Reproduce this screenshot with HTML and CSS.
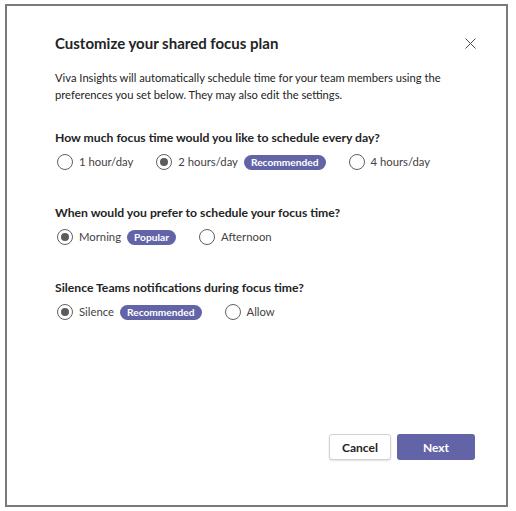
FILE: index.html
```html
<!DOCTYPE html>
<html>
<head>
<meta charset="utf-8">
<link rel="stylesheet" href="styles.css">
</head>
<body>
<div class="frame">
  <div class="header">
    <h1 class="title">Customize your shared focus plan</h1>
    <button class="close" aria-label="Close">
      <svg width="11" height="11" viewBox="0 0 11 11"><path d="M0.5 0.5L10.5 10.5M10.5 0.5L0.5 10.5" stroke="#4a4a4a" stroke-width="1" fill="none"/></svg>
    </button>
  </div>
  <p class="intro">Viva Insights will automatically schedule time for your team members using the preferences you set below. They may also edit the settings.</p>

  <div class="group">
    <div class="question">How much focus time would you like to schedule every day?</div>
    <div class="options">
      <label class="opt"><span class="radio"></span>1 hour/day</label>
      <label class="opt"><span class="radio checked"></span>2 hours/day<span class="badge">Recommended</span></label>
      <label class="opt"><span class="radio"></span>4 hours/day</label>
    </div>
  </div>

  <div class="group">
    <div class="question">When would you prefer to schedule your focus time?</div>
    <div class="options">
      <label class="opt"><span class="radio checked"></span>Morning<span class="badge">Popular</span></label>
      <label class="opt"><span class="radio"></span>Afternoon</label>
    </div>
  </div>

  <div class="group">
    <div class="question">Silence Teams notifications during focus time?</div>
    <div class="options">
      <label class="opt"><span class="radio checked"></span>Silence<span class="badge">Recommended</span></label>
      <label class="opt"><span class="radio"></span>Allow</label>
    </div>
  </div>

  <div class="footer">
    <button class="btn btn-secondary">Cancel</button>
    <button class="btn btn-primary">Next</button>
  </div>
</div>
</body>
</html>
```
FILE: styles.css
```css
* { box-sizing: border-box; }
html, body { margin: 0; padding: 0; background: #fff; }
body {
  font-family: "Lato", "Noto Sans", sans-serif;
  color: #242424;
}
.frame {
  margin: 4px 0 0 5px;
  width: 503px;
  height: 503px;
  border: 2px solid #7a7a7a;
  padding: 25px 31px 45px 48px;
  display: flex;
  flex-direction: column;
}
.header {
  display: flex;
  justify-content: space-between;
  align-items: center;
}
.title {
  margin: 0;
  font-size: 15px;
  line-height: 24px;
  font-weight: 700;
  color: #242424;
}
.close {
  border: 0;
  background: none;
  padding: 0;
  width: 11px;
  height: 11px;
  display: flex;
  margin-right: -1px;
}
.intro {
  margin: 14px 0 0;
  font-size: 11.2px;
  line-height: 17px;
  color: #242424;
}
.group { margin-top: 26px; }
.group + .group { margin-top: 32px; }
.question {
  font-size: 12.2px;
  font-weight: 700;
  line-height: 17px;
}
.options {
  display: flex;
  gap: 21px;
  margin-top: 6px;
  white-space: nowrap;
}
.opt {
  display: flex;
  align-items: center;
  font-size: 11.3px;
  line-height: 20px;
  color: #424242;
  margin-left: 2px;
}
.radio {
  flex: none;
  width: 16px;
  height: 16px;
  border: 1px solid #616161;
  border-radius: 50%;
  margin-right: 6px;
  display: flex;
  align-items: center;
  justify-content: center;
}
.radio.checked::after {
  content: "";
  width: 8px;
  height: 8px;
  border-radius: 50%;
  background: #5c5c5c;
}
.badge {
  margin-left: 6px;
  background: #6264a7;
  color: #fff;
  font-size: 10.2px;
  font-weight: 700;
  line-height: 15px;
  padding: 0 7px;
  border-radius: 8px;
}
.footer {
  margin-top: auto;
  display: flex;
  justify-content: flex-end;
  gap: 6px;
}
.btn {
  height: 26px;
  font-family: inherit;
  font-size: 12px;
  font-weight: 700;
  border-radius: 3px;
  padding: 0;
}
.btn-secondary {
  width: 62px;
  background: #fff;
  color: #242424;
  border: 1px solid #d1d1d1;
  box-shadow: 0 1px 2px rgba(0,0,0,0.12);
}
.btn-primary {
  width: 78px;
  background: #6264a7;
  color: #fff;
  border: 0;
}
```
